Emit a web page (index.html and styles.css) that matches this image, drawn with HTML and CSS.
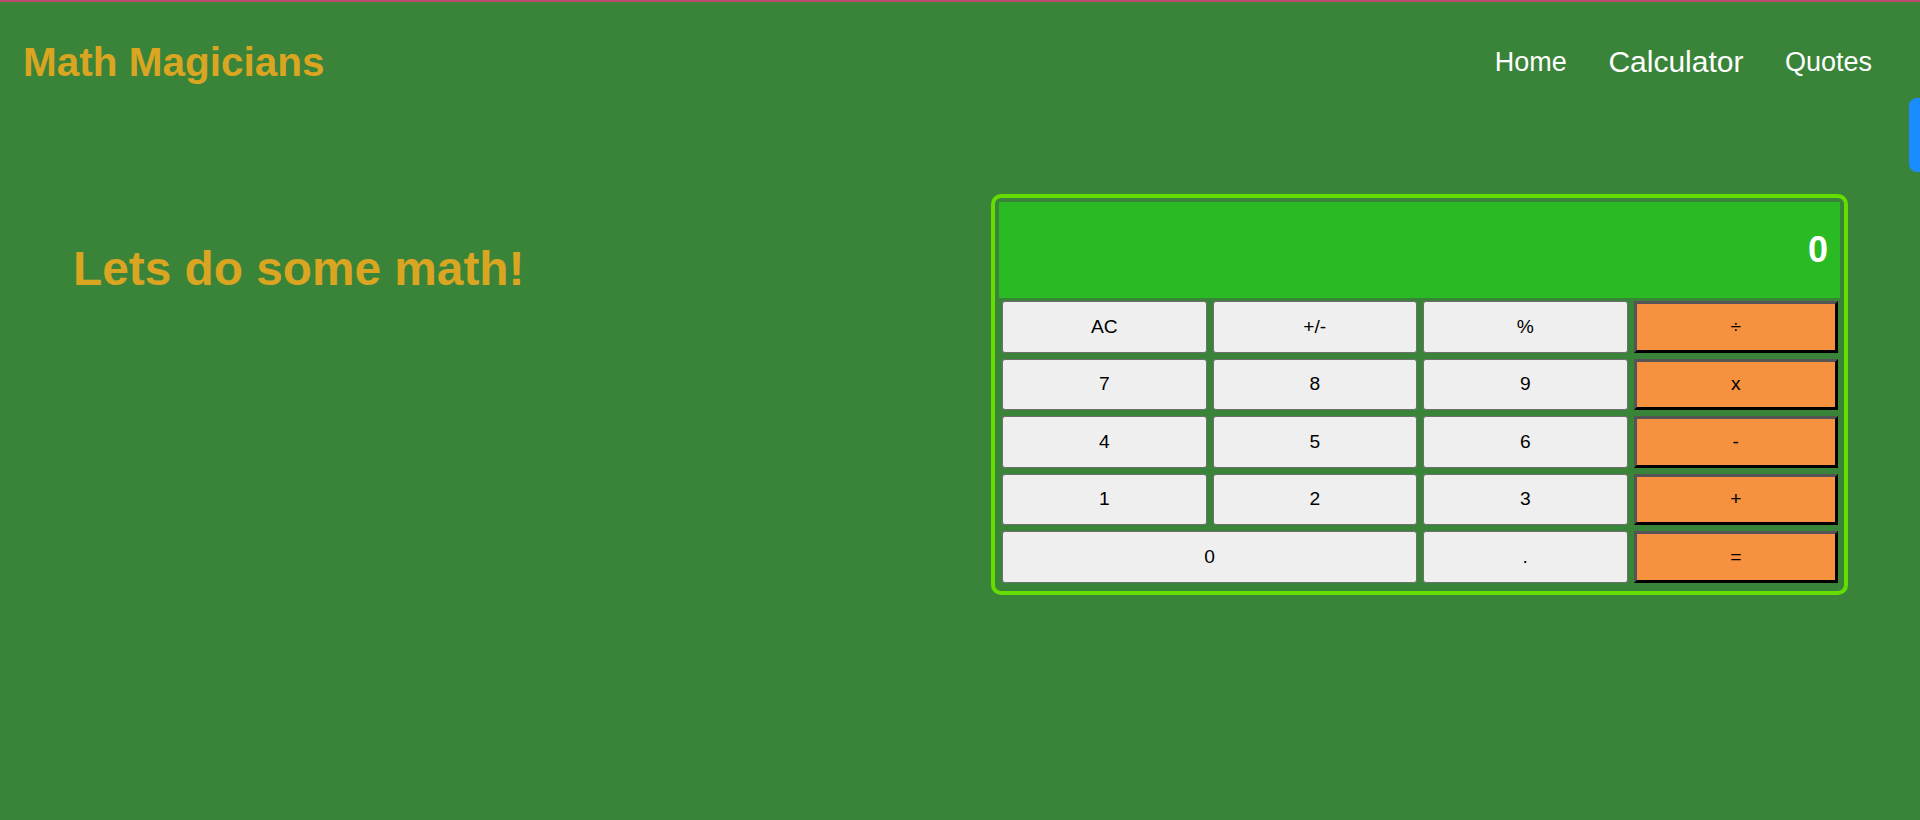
FILE: index.html
```html
<!DOCTYPE html>
<html lang="en">
<head>
<meta charset="utf-8">
<title>Math Magicians</title>
<link rel="stylesheet" href="styles.css">
</head>
<body>
<header class="header">
  <h1 class="logo">Math Magicians</h1>
  <nav class="nav">
    <a class="nav-link" href="#">Home</a>
    <a class="nav-link nav-link-active" href="#">Calculator</a>
    <a class="nav-link" href="#">Quotes</a>
  </nav>
</header>
<main class="main">
  <h2 class="title">Lets do some math!</h2>
  <div class="calculator">
    <div class="display">0</div>
    <div class="keys">
      <button class="key" type="button">AC</button>
      <button class="key" type="button">+/-</button>
      <button class="key" type="button">%</button>
      <button class="key key-op" type="button">÷</button>
      <button class="key" type="button">7</button>
      <button class="key" type="button">8</button>
      <button class="key" type="button">9</button>
      <button class="key key-op" type="button">x</button>
      <button class="key" type="button">4</button>
      <button class="key" type="button">5</button>
      <button class="key" type="button">6</button>
      <button class="key key-op" type="button">-</button>
      <button class="key" type="button">1</button>
      <button class="key" type="button">2</button>
      <button class="key" type="button">3</button>
      <button class="key key-op" type="button">+</button>
      <button class="key key-wide" type="button">0</button>
      <button class="key" type="button">.</button>
      <button class="key key-op" type="button">=</button>
    </div>
  </div>
</main>
<div class="side-tab"></div>
</body>
</html>
```

FILE: styles.css
```css
* {
  box-sizing: border-box;
}

html,
body {
  margin: 0;
  padding: 0;
}

body {
  min-height: 820px;
  background: #3a843a;
  border-top: 2px solid #bd4c6c;
  font-family: "Liberation Sans", Arial, sans-serif;
}

.header {
  height: 120px;
  display: flex;
  align-items: center;
  justify-content: space-between;
  padding: 0 48px 0 23px;
}

.logo {
  margin: 0;
  font-size: 40.5px;
  font-weight: 700;
  color: #daa520;
}

.nav {
  display: flex;
  align-items: center;
  gap: 41.5px;
}

.nav-link {
  color: #ffffff;
  text-decoration: none;
  font-size: 27px;
}

.nav-link-active {
  font-size: 30px;
}

.main {
  display: flex;
  justify-content: space-between;
  align-items: flex-start;
  padding: 72px 72px 0 73px;
}

.title {
  margin: 47px 0 0;
  font-size: 47.8px;
  font-weight: 700;
  color: #daa520;
}

.calculator {
  width: 857px;
  border: 4px solid #65dd00;
  border-radius: 10px;
  padding: 4px;
}

.display {
  height: 96px;
  background: #29ba24;
  color: #ffffff;
  font-size: 36px;
  font-weight: 700;
  display: flex;
  align-items: center;
  justify-content: flex-end;
  padding-right: 12px;
}

.keys {
  display: grid;
  grid-template-columns: repeat(4, 1fr);
  grid-auto-rows: 51.5px;
  column-gap: 6px;
  row-gap: 6px;
  padding: 3px 2px 4px 3px;
}

.key {
  margin: 0;
  background: #efefef;
  border: 1px solid #6f6f6f;
  border-radius: 3px;
  color: #000000;
  font-family: "Liberation Sans", Arial, sans-serif;
  font-size: 19.2px;
  padding: 0;
}

.key-op {
  background: #f5913f;
  border-radius: 0;
  border-width: 3px;
  border-style: solid;
  border-color: #555555 #000000 #000000 #555555;
}

.key-wide {
  grid-column: span 2;
}

.side-tab {
  position: fixed;
  top: 98px;
  right: 0;
  width: 11px;
  height: 74px;
  background: #1a8cff;
  border-radius: 8px 0 0 8px;
}
```
